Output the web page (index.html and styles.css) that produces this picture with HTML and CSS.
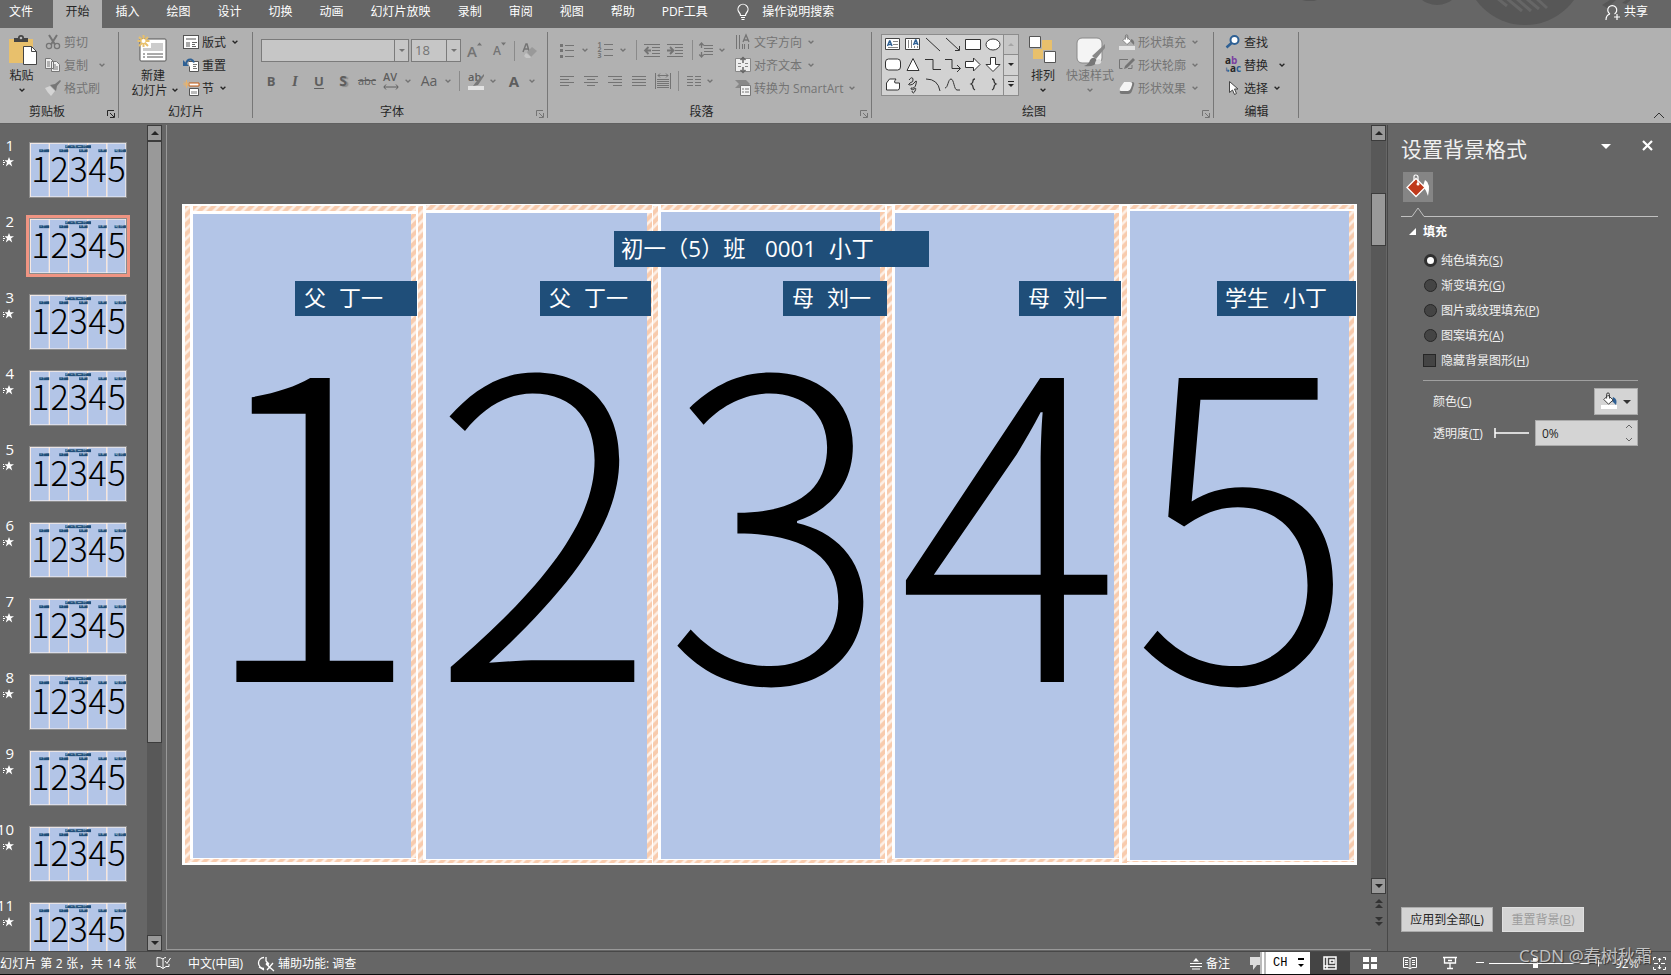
FILE: index.html
```html
<!DOCTYPE html>
<html lang="zh-CN">
<head>
<meta charset="utf-8">
<title>演示文稿</title>
<link rel="stylesheet" href="styles.css">
</head>
<body>
<svg class="defs" width="0" height="0">
  <defs>
    <pattern id="hatch" width="9.5" height="9.5" patternUnits="userSpaceOnUse">
      <rect width="9.5" height="9.5" fill="#f8cbad"/>
      <path d="M-2 6.75L6.75-2M-2 16.25L16.25-2M2.75 21L21 2.75" transform="translate(-2,-2)" stroke="#fdf0e7" stroke-width="2.6"/>
    </pattern>
    <symbol id="chev" viewBox="0 0 6 4"><path d="M.6.7L3 3 5.4.7" fill="none" stroke="currentColor" stroke-width="1.3"/></symbol>
    <symbol id="launch" viewBox="0 0 8 8"><path d="M.5 6V.5H7M3 3l4 4M7.5 3v4.5H3" fill="none" stroke="currentColor"/></symbol>
    <symbol id="bucket" viewBox="0 0 16 16"><path d="M7.500 3.500L13 8.500 8 13 3 8z" fill="#fff" stroke="currentColor"/><path d="M6 7V2.500Q6 1 7.500 1 9 1 9 2.500V7" fill="none" stroke="currentColor"/></symbol>
  </defs>
</svg>
<div class="app">
  <header class="tabs">
    <svg class="deco" width="391" height="28"><g fill="#575757"><circle cx="245" cy="-35.500" r="60.500"/><circle cx="157" cy="-20" r="25"/><path d="M22 0h15l-3 1h-8zM322 5l8-5h6l-9 8zM342 3l4-3h5l-5 4z"/></g><path d="M217-2l10 8M225-3l17 14M236-2l15 13M247-1l12 10M257-1l10 9" stroke="#666" stroke-width="3"/></svg>
    <nav class="tablist">
      <span class="tab file">文件</span><span class="tab active">开始</span><span class="tab">插入</span><span class="tab">绘图</span><span class="tab">设计</span><span class="tab">切换</span><span class="tab">动画</span><span class="tab">幻灯片放映</span><span class="tab">录制</span><span class="tab">审阅</span><span class="tab">视图</span><span class="tab">帮助</span><span class="tab pdf">PDF工具</span>
    </nav>
    <svg class="bulb" width="12" height="17"><path d="M3.500 11.500Q3.500 10 2.200 8.500A5 5 0 1 1 9.800 8.500Q8.500 10 8.500 11.500zM4 13.500h4M4.500 15.500h3" fill="none" stroke="#fff" stroke-width="1.200"/></svg>
    <span class="tell">操作说明搜索</span>
    <span class="share"><svg width="16" height="17"><path d="M1 16q0-5 4-6M5 10a4.500 4.500 0 1 1 4.500 0M12 10v6M9 13h6" fill="none" stroke="#fff" stroke-width="1.200"/></svg>共享</span>
  </header>

  <section class="ribbon">
    <div class="group g-clip">
      <div class="gbody">
        <div class="big paste"><span class="bigicon"><svg width="30" height="31"><path d="M1 4h24v24H1z" fill="#e8c06c"/><path d="M6 7V3h4q0-3 3-3t3 3h4v4z" fill="#444"/><circle cx="13" cy="3" r="1.300" fill="#bbb"/><path d="M15.500 11.500h8l5 5v13h-13z" fill="#fff" stroke="#444"/><path d="M23.500 11.500v5h5" fill="none" stroke="#444"/></svg></span><span>粘贴</span><span><svg class="chev"><use href="#chev"/></svg></span></div>
        <div class="cmds off">
          <div class="cmd"><svg width="16" height="16"><path d="M4 1l6 9.500M12 1L6 10.500" stroke="currentColor" stroke-width="2" fill="none"/><circle cx="4" cy="12" r="2.600" fill="none" stroke="currentColor" stroke-width="1.300"/><circle cx="12" cy="12" r="2.600" fill="none" stroke="currentColor" stroke-width="1.300"/></svg><span>剪切</span></div>
          <div class="cmd"><svg width="16" height="16"><path d="M.500 1.500h5l3 3v7h-8zM6.500 4.500h5l3 3v7h-8z" fill="#eee" stroke="#777"/><path d="M2 5h3M2 7h3M2 9h3M8 8h3M8 10h5M8 12h5" stroke="#777"/></svg><span>复制</span><svg class="chev c-copy"><use href="#chev"/></svg></div>
          <div class="cmd"><svg width="16" height="16"><path d="M0 8l5-2 5 5-4 5q-4-4-6-8z" fill="#d4d4d4"/><path d="M5 5l5-1 5-4 1 1-4 5-1 5z" fill="#777"/></svg><span>格式刷</span></div>
        </div>
      </div>
      <div class="glabel">剪贴板</div><svg class="launch"><use href="#launch"/></svg>
    </div>
    <div class="group g-slides">
      <div class="gbody">
        <div class="big newslide"><span class="bigicon"><svg width="32" height="32"><rect x="4" y="6" width="26" height="22" rx="1" fill="#fff" stroke="#555"/><path d="M15 10h12v8H7v-3h8z" fill="#ccc"/><path d="M7 21h2M11 21h16M7 24h2M11 24h16" stroke="#555"/><path d="M7.500 2v12M1.500 8h12M3 4l9 9M12 4l-9 9" stroke="#e8c06c" stroke-width="2"/><circle cx="7.500" cy="8" r="2" fill="#fff"/></svg></span><span>新建</span><span class="nowrap">幻灯片<svg class="chev gap"><use href="#chev"/></svg></span></div>
        <div class="cmds">
          <div class="cmd"><svg width="16" height="16"><rect x=".5" y="1.500" width="15" height="13" fill="#fff" stroke="#555"/><path d="M3 4h10v2H3zM3 8h4v5H3z" fill="#aaa"/><path d="M9 8.500h5M9 10.500h3M9 12.500h4" stroke="#666"/></svg><span>版式</span><svg class="chev gap"><use href="#chev"/></svg></div>
          <div class="cmd"><svg width="16" height="16"><path d="M5.500 4.500h10v10h-9v-5" fill="#fff" stroke="#555"/><path d="M10 7.500h4M10 9.500h3M10 11.500h4" stroke="#777"/><path d="M3 7q1-5 5-4.500 2 .5 3 3" fill="none" stroke="#2e6094" stroke-width="2"/><path d="M0 3v6h6z" fill="#2e6094"/></svg><span>重置</span></div>
          <div class="cmd"><svg width="16" height="16"><path d="M6 3h10v3H6z" fill="#fff" stroke="#c55a11"/><path d="M6.500 8.500h9v7h-9z" fill="#fff" stroke="#555"/><path d="M8 11h6v3H8z" fill="#bbb"/><path d="M3.500 0v8M0 4h7M1 1.500l5 5M6 1.500l-5 5" stroke="#e8b36c"/></svg><span>节</span><svg class="chev gap"><use href="#chev"/></svg></div>
        </div>
      </div>
      <div class="glabel">幻灯片</div>
    </div>
    <div class="group g-font off">
      <div class="gbody">
        <div class="col">
        <div class="r1">
          <div class="combo"><span></span><i><b class="tri"></b></i></div><span></span>
          <div class="combo size"><span>18</span><i><b class="tri"></b></i></div>
          <span class="grow">A<svg width="6" height="4"><path d="M0 3.500h5L2.500.5z" fill="currentColor"/></svg></span><span class="shrink">A<svg width="6" height="4"><path d="M0 .5h5L2.500 3.500z" fill="currentColor"/></svg></span><em class="vsep"></em>
          <svg width="16" height="16"><path d="M1 9L4 1h1l2 7M2.500 6h4" fill="none" stroke="currentColor" stroke-width="1.500"/><path d="M5 9l5-5 5 4-6 6z" fill="#999"/><path d="M4 10l5 4-1 1H4l-2-2z" fill="#c6c6c6"/></svg>
        </div>
        <div class="r2">
          <b class="glyph">B</b><i class="glyph serif">I</i><b class="glyph und">U</b><b class="glyph shad">S</b><span class="glyph abc">abc</span><span class="glyph av">AV<svg width="16" height="6"><path d="M3 .5L.8 3 3 5.500M13 .5L15.200 3 13 5.500M1 3h14" fill="none" stroke="currentColor"/></svg></span><svg class="chev"><use href="#chev"/></svg><span class="glyph aa">Aa</span><svg class="chev"><use href="#chev"/></svg><em class="vsep"></em>
          <span class="glyph hl">ab<svg width="16" height="16"><path d="M16 0L8 8l-3 4 5-1 6-9z" fill="#777"/><path d="M0 12h16v4H0z" fill="#e2e2e2"/></svg></span><svg class="chev"><use href="#chev"/></svg><b class="glyph fa">A</b><svg class="chev"><use href="#chev"/></svg>
        </div>
        </div>
      </div>
      <div class="glabel">字体</div><svg class="launch"><use href="#launch"/></svg>
    </div>
    <div class="group g-para off">
      <div class="gbody">
        <div class="col">
          <div class="r1">
            <svg width="14" height="15"><path d="M5 2.500h9M5 7.500h9M5 13.500h9" stroke="currentColor"/><path d="M0 1h3v3H0zM0 6h3v3H0zM0 12h3v3H0z" fill="currentColor"/></svg><svg class="chev"><use href="#chev"/></svg>
            <span class="nums"><b>1<br>2<br>3</b><svg width="9" height="15"><path d="M0 2.500h9M0 7.500h9M0 13.500h9" stroke="currentColor"/></svg></span><svg class="chev"><use href="#chev"/></svg><em class="vsep"></em>
            <svg width="16" height="14"><path d="M0 1.500h16M8 4.500h8M8 7.500h8M8 10.500h8M0 13.500h16" stroke="currentColor"/><path d="M1 7.500h6M4.500 4L1 7.500 4.500 11" fill="none" stroke="currentColor" stroke-width="1.800"/></svg>
            <svg width="16" height="14"><path d="M0 1.500h16M8 4.500h8M8 7.500h8M8 10.500h8M0 13.500h16" stroke="currentColor"/><path d="M0 7.500h6M3 4l3.500 3.500L3 11" fill="none" stroke="currentColor" stroke-width="1.800"/></svg>
            <em class="vsep"></em>
            <svg width="14" height="16"><path d="M5 3.500h9M5 6.500h9M5 9.500h9M5 12.500h9" stroke="currentColor"/><path d="M2.500 1v5M2.500 10v5M.3 3.500l2.200-2.500 2.200 2.500M.3 12.500L2.500 15l2.200-2.500" fill="none" stroke="currentColor" stroke-width="1.300"/></svg><svg class="chev"><use href="#chev"/></svg>
          </div>
          <div class="r2">
            <svg width="14" height="12"><path d="M0 1.500h14M0 4.500h9M0 7.500h14M0 10.500h9" stroke="currentColor"/></svg>
            <svg width="14" height="12"><path d="M0 1.500h14M3 4.500h8M0 7.500h14M3 10.500h8" stroke="currentColor"/></svg>
            <svg width="14" height="12"><path d="M0 1.500h14M5 4.500h9M0 7.500h14M5 10.500h9" stroke="currentColor"/></svg>
            <svg width="14" height="12"><path d="M0 1.500h14M0 4.500h14M0 7.500h14M0 10.500h14" stroke="currentColor"/></svg>
            <svg width="16" height="16"><path d="M.5 0v16M15.500 0v16M2 6.500h12M2 8.500h12M2 10.500h12M2 12.500h12M2 14.500h12M3 2.500h10M5 .5L3 2.500l2 2M11 .5l2 2-2 2" fill="none" stroke="currentColor"/></svg>
            <em class="vsep"></em>
            <svg width="14" height="12"><path d="M0 1.500h6M0 4.500h6M0 7.500h6M0 10.500h6M8 1.500h6M8 4.500h6M8 7.500h6M8 10.500h6" stroke="currentColor"/></svg><svg class="chev"><use href="#chev"/></svg>
          </div>
        </div>
        <div class="cmds">
          <div class="cmd"><svg width="16" height="16"><path d="M1.500 1v14M4.500 1v14M9.500 10v5M13.500 10v5M7.500 10v5" stroke="currentColor"/><path d="M8 8l3-7 3 7M9 6h4" fill="none" stroke="currentColor" stroke-width="1.300"/></svg><span>文字方向</span><svg class="chev gap"><use href="#chev"/></svg></div>
          <div class="cmd"><svg width="16" height="16"><path d="M.5 1.500h15v13H.5z" fill="#eee" stroke="#888"/><path d="M3 6.500h3M3 9.500h3M10 6.500h3M10 9.500h3" stroke="#888"/><path d="M8 0v6M8 10v6M5.500 3L8 .5 10.500 3M5.500 13L8 15.500l2.500-2.500" fill="none" stroke="#666" stroke-width="1.500"/></svg><span>对齐文本</span><svg class="chev gap"><use href="#chev"/></svg></div>
          <div class="cmd"><svg width="16" height="16"><path d="M0 0h11l4 4-4 4H0l4-4z" fill="#888"/><path d="M5.500 5.500h10v10h-10z" fill="#f2f2f2" stroke="#777"/><path d="M7 9h2M10 9h4M7 12h2M10 12h4" stroke="#777"/></svg><span class="smart">转换为 SmartArt</span><svg class="chev gap"><use href="#chev"/></svg></div>
        </div>
      </div>
      <div class="glabel">段落</div><svg class="launch"><use href="#launch"/></svg>
    </div>
    <div class="group g-draw">
      <div class="gbody">
        <div class="gallery">
          <div class="shapes">
            <svg width="16" height="16"><path d="M.5 2.500h14v11H.5z" fill="#fff" stroke="#444"/><path d="M2.500 10L4.500 5h.5l2 5M3 8.500h3.500" stroke="#2e6094" stroke-width="1.400" fill="none"/><path d="M8 5.500h5M8 8.500h5M3 11.500h10" stroke="#888"/></svg>
            <svg width="16" height="16"><path d="M.5 2.500h14v11H.5z" fill="#fff" stroke="#444"/><path d="M8.500 9L10.500 4h.5l2 5M9 7.500h3.500" stroke="#2e6094" stroke-width="1.400" fill="none"/><path d="M3.500 4v8M6.500 4v8M9.500 10v2M12.500 10v2" stroke="#888"/></svg>
            <svg width="16" height="16"><path d="M1 2l14 13" stroke="#333"/></svg>
            <svg width="16" height="16"><path d="M1 2l13 12M14.500 10v4.500H10" stroke="#333" fill="none"/></svg>
            <svg width="16" height="16"><path d="M.5 3.500h15v10H.5z" fill="#fff" stroke="#333"/></svg>
            <svg width="16" height="16"><ellipse cx="8" cy="8.500" rx="7" ry="5.500" fill="#fff" stroke="#333"/></svg>
            <svg width="16" height="16"><rect x=".5" y="3" width="15" height="11" rx="3" fill="#fff" stroke="#333"/></svg>
            <svg width="16" height="16"><path d="M8 2.500l6 12H2z" fill="#fff" stroke="#333"/></svg>
            <svg width="16" height="16"><path d="M0 3.500h8v10h8" fill="none" stroke="#333"/></svg>
            <svg width="16" height="16"><path d="M0 3.500h7v9h8M12 9l3.500 3.500L12 16" fill="none" stroke="#333"/></svg>
            <svg width="16" height="16"><path d="M.5 5.500h8V2l6.500 6.500L8.500 15v-3.500h-8z" fill="#fff" stroke="#333"/></svg>
            <svg width="16" height="16"><path d="M5.500 1.500h5v7H15L8 15.500 1 8.500h4.500z" fill="#fff" stroke="#333"/></svg>
            <svg width="16" height="16"><path d="M1.500 14V7l3-4H11q-3 4 0 4h3.500v5q0 2-2 2z" fill="#fff" stroke="#333"/></svg>
            <svg width="16" height="16"><path d="M4 4q3-4 4-1T5 7q-3 2 0 2t5-3 1 2-5 4q0 3 3 1t1 2-3 0" fill="none" stroke="#333"/></svg>
            <svg width="16" height="16"><path d="M1 3q12 0 14 12" fill="none" stroke="#333"/></svg>
            <svg width="16" height="16"><path d="M0 12C3 12 3 3 6 3s3 11 6 11h3" fill="none" stroke="#333"/></svg>
            <svg width="16" height="16"><path d="M10 3Q8 3 8 5t-2 3q2 1 2 3t2 3" fill="none" stroke="#333" stroke-width="1.300"/></svg>
            <svg width="16" height="16"><path d="M7 3q2 0 2 2t2 3q-2 1-2 3t-2 3" fill="none" stroke="#333" stroke-width="1.300"/></svg>
          </div>
          <div class="scroller"><span><b class="tri up"></b></span><span><b class="tri"></b></span><span><b class="more"></b></span></div>
        </div>
        <div class="big arrange"><span class="bigicon"><svg width="28" height="28"><path d="M13 5h10v10H13zM4 14h10v10H4z" fill="#e8c06c"/><path d="M.5 1.500h11v11H.5zM15.500 16.500h11v11h-11z" fill="#fff" stroke="#555"/></svg></span><span>排列</span><span><svg class="chev"><use href="#chev"/></svg></span></div>
        <div class="big quick off"><span class="bigicon"><svg width="30" height="30"><rect x="1" y="1" width="25" height="25" rx="5" fill="#f4f4f4" stroke="#888"/><path d="M29 7v4L20 22l-4-3z" fill="#888"/><path d="M8 29q5-2 6-6 3-4 6-1 2 3-2 6-4 2-10 1z" fill="#777"/><path d="M19 27q0-4 4-5 3 1 2 4-2 2-6 1z" fill="#ddd"/></svg></span><span>快速样式</span><span><svg class="chev"><use href="#chev"/></svg></span></div>
        <div class="cmds off">
          <div class="cmd"><svg width="16" height="16"><use href="#bucket" width="16" height="13"/><path d="M12 5q4 1 3 6l-3-3z" fill="#777"/><path d="M0 12h16v4H0z" fill="#e2e2e2"/></svg><span>形状填充</span><svg class="chev gap"><use href="#chev"/></svg></div>
          <div class="cmd"><svg width="16" height="16"><path d="M9 2.500H.5v9h3M13 8v3.500H9" fill="none" stroke="currentColor"/><path d="M14 1l2 2-8 8-3 1 1-3z" fill="currentColor"/></svg><span>形状轮廓</span><svg class="chev gap"><use href="#chev"/></svg></div>
          <div class="cmd"><svg width="16" height="16"><path d="M5 2h8q3 0 2 3l-2 6q-1 3-4 3H3q-3 0-2-3z" fill="#777"/><path d="M5 2h6q3 0 2 3l-1 3q-1 3-3 3H2q-2 0-1-3z" fill="#f4f4f4"/></svg><span>形状效果</span><svg class="chev gap"><use href="#chev"/></svg></div>
        </div>
      </div>
      <div class="glabel">绘图</div><svg class="launch off"><use href="#launch"/></svg>
    </div>
    <div class="group g-edit">
      <div class="gbody">
        <div class="cmds">
          <div class="cmd"><svg width="16" height="16"><circle cx="9.500" cy="6" r="4" fill="#fff" stroke="#2e6094" stroke-width="2"/><path d="M6.500 9L1.500 13.500" stroke="#2e6094" stroke-width="2.500"/></svg><span>查找</span></div>
          <div class="cmd"><span class="abac"><b>a<i>b</i></b><b><u>↳</u>a<s>c</s></b></span><span>替换</span><svg class="chev c-rep"><use href="#chev"/></svg></div>
          <div class="cmd"><svg width="16" height="16"><path d="M4.500 1.500v11l3-2.500 2 4.500 2-1-2-4.500h3.500z" fill="#fff" stroke="#444"/></svg><span>选择</span><svg class="chev gap"><use href="#chev"/></svg></div>
        </div>
      </div>
      <div class="glabel">编辑</div>
    </div>
    <div class="rest"><svg width="12" height="7"><path d="M1 6l5-5 5 5" fill="none" stroke="#333"/></svg></div>
  </section>

  <main class="work">
    <aside class="thumbs" id="thumbs"></aside>
    <div class="sbar left"><span class="sbtn"><b class="tri up"></b></span><span class="sthumb"></span><span class="strack"></span><span class="sbtn"><b class="tri"></b></span></div>
    <div class="stage"><div class="slide" id="slide"></div></div>
    <div class="sbar right"><span class="sbtn"><b class="tri up"></b></span><span class="strack top"></span><span class="sthumb"></span><span class="strack"></span><span class="sbtn"><b class="tri"></b></span>
      <svg class="dbl" width="8" height="30"><path d="M4 0l4 4H0zM4 5l4 4H0zM0 18h8l-4 4zM0 23h8l-4 4z" fill="#333"/></svg></div>
    <aside class="pane">
      <div class="ptitle"><h1>设置背景格式</h1><svg width="10" height="6"><path d="M0 0h10L5 5z" fill="#fff"/></svg><svg width="11" height="11"><path d="M1 1l9 9M10 1l-9 9" stroke="#fff" stroke-width="2.200"/></svg></div>
      <div class="fillicon"><svg width="26" height="26"><path d="M19 7q6 3 3 16-2-6-5-10z" fill="#fff"/><path d="M10 5.500l9 9-9 9-9-9z" fill="#c03a1c" stroke="#fff" stroke-width="1.300"/><path d="M8 8V3.500Q8 2 9.500 2 12 2 12 4v7" fill="none" stroke="#fff" stroke-width="1.200"/><circle cx="12" cy="11" r="1.500" fill="#fff"/></svg></div>
      <svg class="rule" width="257" height="11"><path d="M0 9.500h11L17 1l6 8.500h234" fill="none" stroke="#c0c0c0"/></svg>
      <div class="sec"><svg width="7" height="7"><path d="M7 0v7H0z" fill="#fff"/></svg><b>填充</b></div>
      <div class="opts">
        <label><i class="radio on"></i>纯色填充(<u>S</u>)</label>
        <label><i class="radio"></i>渐变填充(<u>G</u>)</label>
        <label><i class="radio"></i>图片或纹理填充(<u>P</u>)</label>
        <label><i class="radio"></i>图案填充(<u>A</u>)</label>
        <label><i class="check"></i>隐藏背景图形(<u>H</u>)</label>
      </div>
      <div class="color"><span>颜色(<u>C</u>)</span><span class="cbtn"><svg width="16" height="17"><path d="M12 4q5 2 3 8l-4-4z" fill="#2e6094"/><use href="#bucket" width="15" height="15" y="-1"/><path d="M0 12h16v4H0z" fill="#fff"/></svg><b class="tri"></b></span></div>
      <div class="trans"><span>透明度(<u>T</u>)</span><svg width="36" height="10"><path d="M1 0v10M1 5h34" stroke="#fff" stroke-width="1.500"/></svg><span class="spin">0%<svg width="8" height="18"><path d="M1 4l3-3 3 3M1 14l3 3 3-3" fill="none" stroke="#666"/></svg></span></div>
      <div class="pbtns"><span class="pbtn">应用到全部(<u>L</u>)</span><span class="pbtn dis">重置背景(<u>B</u>)</span></div>
    </aside>
  </main>

  <footer class="status">
    <span class="s-count">幻灯片 第 2 张，共 14 张</span>
    <svg class="s-book" width="15" height="14"><path d="M7 12.500V3Q5 1.500 1 1.500v9h3l3 2 3-2h3V8M7 3q1-1.500 3-1.500M9 5l2 2.500L14.500 2" fill="none" stroke="#fff"/></svg>
    <span class="s-lang">中文(中国)</span>
    <svg class="s-acc" width="17" height="15"><path d="M6 1.500a5.500 5.500 0 0 0 0 11M1 11l5 3M8 1v4l3 3M8 8l8 7M15 7l-6 7M8 7l3 2" fill="none" stroke="#fff" stroke-width="1.300"/></svg>
    <span class="s-a11y">辅助功能: 调查</span>
    <span class="s-right">
      <svg class="s-nicon" width="12" height="13"><path d="M6 1l3 3.500H3z" fill="#fff"/><path d="M0 6.500h12M0 9.500h12M2 12h8" stroke="#fff"/></svg><span class="s-notes">备注</span>
      <svg class="s-bub" width="10" height="14"><path d="M0 1h10v8H7l-4 5V9H0z" fill="#ddd"/></svg>
      <span class="ime">CH<svg width="6" height="12"><path d="M0 2h6" stroke="#000" stroke-width="2"/><path d="M0 7h6L3 10z"/></svg></span>
      <span class="view sel"><svg width="14" height="14"><path d="M1 1h12v12H1zM1 10h12M4 1v12M7 4h4v3H7z" fill="none" stroke="#fff" stroke-width="1.500"/></svg></span>
      <span class="view"><svg width="14" height="14"><path d="M0 1h6v5H0zM8 1h6v5H8zM0 8h6v5H0zM8 8h6v5H8z" fill="#fff"/></svg></span>
      <span class="view"><svg width="14" height="14"><path d="M.5 1.500H5L7 3l2-1.500h4.500v10H9L7 13l-2-1.500H.5zM7 3v10M2 4.500h3M2 6.500h3M2 8.500h3M9 4.500h3M9 6.500h3M9 8.500h3" fill="none" stroke="#fff"/></svg></span>
      <span class="view"><svg width="14" height="14"><path d="M0 1.500h14M1.500 2v5h11V2M7 7v5.500M4 12.500h6M5 4.500h4" fill="none" stroke="#fff" stroke-width="1.300"/></svg></span>
      <svg class="zoomer" width="128" height="14"><path d="M0 6.500h8M13 7.500h101M119 7h7M122.500 3.500v7" stroke="#fff"/><path d="M57 2h5v10h-5z" fill="#fff"/></svg>
      <span class="s-pct">92%</span>
      <svg class="fit" width="13" height="13"><path d="M.5 3V.5H3M10 .5h2.500V3M12.500 10v2.500H10M3 12.500H.5V10M6.500 1v4M6.500 8v4M1 6.500h4M8 6.500h4M5 3l1.500-2L8 3M5 10l1.500 2L8 10" fill="none" stroke="#fff"/></svg>
    </span>
    <span class="mark">CSDN @春树秋霜</span>
  </footer>
</div>
<script src="slides.js"></script>
</body>
</html>
```

FILE: styles.css
```css
* { box-sizing: border-box; }
body { margin: 0; background: #666; font: 12px/15px "Open Sans", "Noto Sans CJK SC", sans-serif; color: #262626; }
svg { display: block; flex: none; overflow: visible; }
.defs { position: absolute; }
.app { width: 1671px; height: 975px; display: flex; flex-direction: column; overflow: hidden; }

.tabs { position: relative; height: 28px; display: flex; background: #666; color: #fff; line-height: 24px; }
.deco { position: absolute; right: 0; top: 0; overflow: hidden; }
.tablist { display: flex; }
.tab { padding: 0 13.5px; white-space: nowrap; }
.tab.file { padding: 0 20px 0 9px; }
.tab.active { background: #b1b1b1; color: #262626; padding: 0 12.5px; margin-right: 0; }
.tab.pdf { width: 87px; }
.bulb { margin: 4px 13px 0 2px; }
.share { position: relative; display: flex; margin-left: auto; margin-right: 23px; gap: 3px; }
.share svg { margin-top: 4px; }

.ribbon { height: 96px; display: flex; background: #b1b1b1; border-bottom: 1px solid #606060; }
.group { position: relative; height: 90px; }
.group::after { content: ""; position: absolute; right: 0; top: 4px; width: 1px; height: 86px; background: #777; }
.gbody { height: 75px; display: flex; }
.glabel { text-align: center; height: 16px; line-height: 17px; color: #262626; }
.launch { position: absolute; right: 4px; top: 82px; width: 8px; height: 8px; }
.off { color: #747474; }
.g-clip { width: 119px; }
.g-clip .glabel { padding-right: 25px; }
.g-slides { width: 134px; }
.g-font { width: 295px; }
.g-font .glabel { padding-right: 17px; }
.g-para { width: 324px; }
.g-para .glabel { padding-right: 17px; }
.g-draw { width: 342px; }
.g-draw .glabel { padding-right: 18px; }
.g-edit { width: 85px; }
.rest { flex: 1; display: flex; justify-content: flex-end; align-items: flex-end; padding: 0 6px 4px 0; }
.chev { width: 6px; height: 4px; }
.chev.gap { margin-left: 6px; }
.big { display: flex; flex-direction: column; align-items: center; white-space: nowrap; }
.big > span { height: 15px; display: flex; align-items: center; }
.big > .bigicon { height: 39.5px; align-items: flex-start; }
.nowrap { white-space: nowrap; }
.paste { width: 42px; padding-left: 1px; margin-right: 3px; }
.paste .bigicon { padding: 7px 0 0 2px; }
.cmds { padding-top: 2.5px; }
.cmd { height: 23px; display: flex; align-items: center; white-space: nowrap; }
.cmd > span { margin-left: 3px; }
.c-copy { margin-left: 11px; }
.c-rep { margin-left: 11px; }
.newslide { width: 64px; padding-left: 0; }
.newslide .bigicon { padding: 5px 0 0 2px; }
.newslide .nowrap { padding-left: 7px; }
.newslide .gap { margin-left: 4px; }
.newslide > span:nth-child(2) { padding-left: 4px; }

.r1, .r2 { display: grid; align-items: center; justify-items: center; height: 24px; }
.r1 { margin-top: 10px; }
.r2 { margin-top: 7px; }
.g-font .gbody { padding-left: 6px; }
.g-font .r1 { margin-left: 2px; grid-template-columns: 148px 2px 50px 28px 22px 6px 26px; }
.g-font .r2 { grid-template-columns: 24px 24px 24px 24px 24px 24px 10px 32px 6px 17px 16px 18px 24px 12px; }
.g-para .col { width: 180px; padding-left: 7px; }
.g-para .r1 { grid-template-columns: 24px 12px 28px 8px 18px 14px 32px 2px 26px 6px; }
.g-para .r2 { grid-template-columns: 24px 24px 24px 24px 24px 7px 23px 10px; }
.g-para .cmds { margin-left: 7px; }
.vsep { width: 1px; height: 20px; background: #8a8a8a; }
.combo { width: 148px; height: 23px; border: 1px solid #7b7b7b; background: #c6c6c6; display: flex; font-size: 13px; line-height: 21px; }
.combo span { flex: 1; padding-left: 3px; }
.combo i { width: 14px; border-left: 1px solid #7b7b7b; display: flex; align-items: center; justify-content: center; }
.combo.size { width: 50px; }
.tri { border: 3px solid transparent; border-top: 3px solid currentColor; border-bottom: 0; width: 0; height: 0; }
.tri.up { border-top: 0; border-bottom: 3px solid currentColor; }
.grow, .shrink { display: flex; font-size: 15px; font-weight: 600; line-height: 24px; padding-top: 1px; }
.shrink { font-size: 12px; }
.grow svg, .shrink svg { margin-top: 3px; }
.glyph { font-size: 13px; line-height: 20px; color: #5e5e5e; }
.serif { font-family: "Liberation Serif", serif; font-size: 15px; font-weight: 700; }
.und { text-decoration: underline; text-underline-offset: 2px; }
.shad { text-shadow: 2px 1px 1px #8a8a8a; font-size: 14px; }
.abc { text-decoration: line-through; font-size: 11px; }
.av { font-size: 11px; line-height: 12px; font-weight: 600; height: 20px; }
.av svg { margin-top: 1px; }
.aa { font-size: 14px; }
.fa { font-size: 15px; }
.hl { position: relative; width: 16px; height: 18px; line-height: 10px; font-size: 11px; font-weight: 600; }
.hl svg { position: absolute; left: 0; top: 2px; }
.nums { display: flex; gap: 2px; }
.nums b { font-size: 7px; line-height: 5.5px; }

.gallery { display: flex; width: 138px; height: 62px; margin: 6px 0 0 9px; border: 1px solid #8c8c8c; background: #d2d2d2; }
.shapes { width: 122px; padding-left: 1px; display: grid; grid-template-columns: repeat(6, 20px); grid-auto-rows: 20px; align-items: center; justify-items: center; margin-top: -1px; }
.scroller { width: 15px; border-left: 1px solid #8c8c8c; display: flex; flex-direction: column; }
.scroller span { flex: 1; display: flex; align-items: center; justify-content: center; border-top: 1px solid #8c8c8c; }
.scroller span:first-child { border: 0; color: #a5a5a5; background: #c6c6c6; }
.more { border: 3px solid transparent; border-top: 3px solid; border-bottom: 0; position: relative; }
.more::before { content: ""; position: absolute; left: -3px; top: -6px; width: 6px; height: 1px; background: #262626; }
.arrange { width: 46px; margin-left: 1px; }
.arrange .bigicon { padding: 7px 0 0 0; }
.quick { width: 50px; margin-left: -1px; }
.quick .bigicon { padding: 9px 0 0 2px; }
.g-draw .cmds { margin-left: 4px; }
.g-edit .cmds { margin-left: 11px; }
.abac { width: 16px; font-size: 10px; line-height: 8px; display: flex; flex-direction: column; }
.cmd > .abac { margin: 0; }
.abac i { font-style: normal; color: #7b3fa0; }
.abac u { text-decoration: none; color: #2e6094; font-size: 6px; }
.abac s { text-decoration: none; color: #2e6094; }

.work { flex: 1; display: flex; min-height: 0; padding-top: 1px; }
.thumbs { width: 147px; height: 827px; overflow: hidden; padding-top: 14px; }
.item { display: flex; height: 76px; }
.idx { width: 26px; padding: 0 12px 0 0; text-align: right; color: #fff; font-size: 15px; line-height: 16px; display: flex; flex-direction: column; align-items: flex-end; white-space: nowrap; margin-top: -2px; }
.idx svg { margin: 4px 0 0; }
.frame { height: 62px; width: 104px; border: 3px solid transparent; }
.frame svg { width: 98px; height: 56px; border: 1px solid #8c8c8c; background: #fff; overflow: hidden; }
.item.sel .frame { border-color: #ef9482; }
.sbar { display: flex; flex-direction: column; color: #262626; }
.sbar.left { width: 15px; height: 826px; background: #585858; }
.sbtn { height: 16px; background: #999; border: 1px solid #3c3c3c; display: flex; align-items: center; justify-content: center; }
.sbar .tri { border-width: 0 4px; border-top: 4px solid; border-left-color: transparent; border-right-color: transparent; }
.sbar .tri.up { border-top: 0; border-bottom: 4px solid; }
.sthumb { background: #999; border: 1px solid #3c3c3c; }
.sbar.left .sthumb { height: 602px; }
.strack { flex: 1; background: #585858; }
.stage { width: 1205px; height: 825px; margin-left: 4px; border-left: 1px solid #999; border-bottom: 1px solid #999; padding: 79px 0 0 15px; }
.slide svg { width: 1175px; height: 661px; background: #fff; }
.sbar.right { width: 17px; height: 826px; border-right: 1px solid #484848; padding-right: 1px; }
.sbar.right .strack.top { flex: none; height: 52px; }
.sbar.right .sthumb { height: 53px; }
.dbl { margin: 5px 0 22px 4px; }

.pane { flex: 1; padding-left: 13px; color: #f0f0f0; display: flex; flex-direction: column; align-items: flex-start; }
.ptitle { display: flex; width: 258px; height: 47px; padding-top: 8px; }
.ptitle h1 { margin: 0; flex: 1; font-size: 21px; font-weight: 400; line-height: 32px; }
.ptitle svg:nth-child(2) { margin: 11px 31px 0 0; }
.ptitle svg:nth-child(3) { margin: 7px 6px 0 0; }
.fillicon { width: 30px; height: 30px; margin-left: 2px; background: #858585; padding: 1px 0 0 3px; }
.rule { margin-top: 5px; }
.sec { display: flex; align-items: center; margin-top: 4px; height: 18px; padding-left: 8px; gap: 7px; color: #fff; }
.opts { margin: 8px 0 0 22px; width: 215px; height: 133px; border-bottom: 1px solid #a0a0a0; }
.opts label { display: flex; align-items: center; height: 25px; }
.radio { width: 13px; height: 13px; border-radius: 50%; background: #444; border: 1px solid #262626; margin: 0 4px 0 1px; }
.radio.on { border: 3px solid #303030; background: #fff; }
.check { width: 13px; height: 13px; background: #444; border: 1px solid #262626; margin-right: 5px; }
.color, .trans { display: flex; align-items: center; justify-content: space-between; width: 205px; margin-left: 32px; }
.color { margin-top: 7px; height: 27px; }
.cbtn { width: 44px; height: 27px; background: #d4d4d4; border: 1px solid #ababab; display: flex; align-items: center; justify-content: center; gap: 6px; color: #333; }
.cbtn .tri { border-width: 4px 4px 0; }
.trans { margin-top: 5px; height: 26px; }
.trans > svg { margin-left: 6px; }
.spin { width: 103px; height: 26px; background: #d4d4d4; border: 1px solid #ababab; display: flex; align-items: center; justify-content: space-between; padding: 0 4px 0 6px; color: #262626; }
.pbtns { display: flex; gap: 9px; margin-top: auto; margin-bottom: 19px; }
.pbtn { width: 92px; height: 25px; line-height: 23px; text-align: center; background: #d4d4d4; border: 1px solid #ababab; color: #262626; }
.pbtn.dis { width: 82px; color: #9c9c9c; border-color: #e0e0e0; }

.status { position: relative; height: 24px; border-top: 1px solid #484848; border-bottom: 1px solid #0b0b0b; display: flex; align-items: center; color: #fff; white-space: nowrap; }
.s-count { width: 156px; letter-spacing: .27px; }
.s-lang { width: 56px; margin-left: 17px; }
.s-acc { margin: 0 3px 0 14px; }
.s-right { margin-left: auto; display: flex; align-items: center; height: 22px; }
.s-notes { margin: 0 20px 0 4px; }
.ime { display: flex; align-items: center; justify-content: space-between; width: 50px; height: 22px; background: #fff; color: #000; border-left: 6px double #bbb; padding: 0 6px 0 7px; font: 12px "Liberation Mono", monospace; }
.view { width: 40px; height: 22px; display: flex; align-items: center; justify-content: center; }
.view.sel { background: #444; }
.zoomer { margin-left: 6px; }
.s-pct { margin: 0 13px 0 11px; width: 25px; }
.fit { margin-right: 5px; }
.mark { position: absolute; left: 1519px; top: -8px; font-size: 17px; line-height: 24px; color: rgba(225,225,225,.8); text-shadow: 1px 1px 1px #333; }
```

FILE: slides.js
```js
// Builds the slide artwork shared by the editor stage and the thumbnail list.
const panels = [
  { x0: 11, x1: 229, y0: 10, y1: 654 },
  { x0: 244, x1: 465, y0: 9, y1: 655 },
  { x0: 479, x1: 698, y0: 8, y1: 655 },
  { x0: 713, x1: 932, y0: 9, y1: 654 },
  { x0: 948, x1: 1167, y0: 7, y1: 656 }
];
const labels = [
  { x: 113, w: 122, parts: [[9, '父'], [44, '丁一']] },
  { x: 358, w: 111, parts: [[9, '父'], [44, '丁一']] },
  { x: 601, w: 104, parts: [[9, '母'], [44, '刘一']] },
  { x: 837, w: 102, parts: [[9, '母'], [44, '刘一']] },
  { x: 1035, w: 139, parts: [[8, '学生'], [66, '小丁']] }
];
const digits = [[16, 1], [250, 2], [482, 3], [716, 4], [950, 5]];

function slideSvg() {
  let s = '<svg viewBox="0 0 1175 661" preserveAspectRatio="none"><rect width="1175" height="661" fill="#fff"/>';
  for (const p of panels) {
    const w = p.x1 - p.x0;
    s += `<rect x="${p.x0 - 8}" y="2" width="5" height="657" fill="url(#hatch)"/>`;
    s += `<rect x="${p.x0}" y="${p.y0 - 8 < 2 ? 1 : 2}" width="${w + 5}" height="${p.y0 < 8 ? 4 : 5}" fill="url(#hatch)"/>`;
    s += `<rect x="${p.x1}" y="${p.y0}" width="5" height="${p.y1 - p.y0}" fill="url(#hatch)"/>`;
    s += `<rect x="${p.x0 - 8}" y="${p.y1 + 1}" width="${w + 13}" height="${p.y1 > 655 ? 1 : 3}" fill="url(#hatch)"/>`;
    s += `<rect x="${p.x0}" y="${p.y0}" width="${w}" height="${p.y1 - p.y0}" fill="#b3c5e7"/>`;
  }
  for (const [x, d] of digits) {
    s += `<text x="${x}" y="478" font-family="Noto Sans CJK SC" font-size="417" font-weight="300">${d}</text>`;
  }
  for (const l of labels) {
    s += `<rect x="${l.x}" y="77" width="${l.w}" height="35" fill="#1f4e79"/>`;
    for (const [dx, t] of l.parts) s += `<text x="${l.x + dx}" y="102" font-size="22" fill="#fff">${t}</text>`;
  }
  s += '<rect x="432" y="27" width="315" height="36" fill="#1f4e79"/>';
  s += '<g font-size="22.4" fill="#fff"><text x="439" y="53">初一（5）班</text><text x="583" y="53">0001</text><text x="647" y="53">小丁</text></g>';
  return s + '</svg>';
}

document.getElementById('slide').innerHTML = slideSvg();
const star = '<svg width="11" height="10"><path d="M6 0l1.300 3.300H11L8 5.500 9.200 9.500 6 7 2.800 9.500 4 5.500 1.500 3.300h3.200zM0 3h1v1H0zM0 5h2v1H0zM0 7h1v1H0z" fill="#fff"/></svg>';
let list = '';
for (let n = 1; n <= 11; n++) {
  list += `<div class="item${n === 2 ? ' sel' : ''}"><div class="idx">${n}${star}</div><div class="frame">${slideSvg()}</div></div>`;
}
document.getElementById('thumbs').innerHTML = list;
```
